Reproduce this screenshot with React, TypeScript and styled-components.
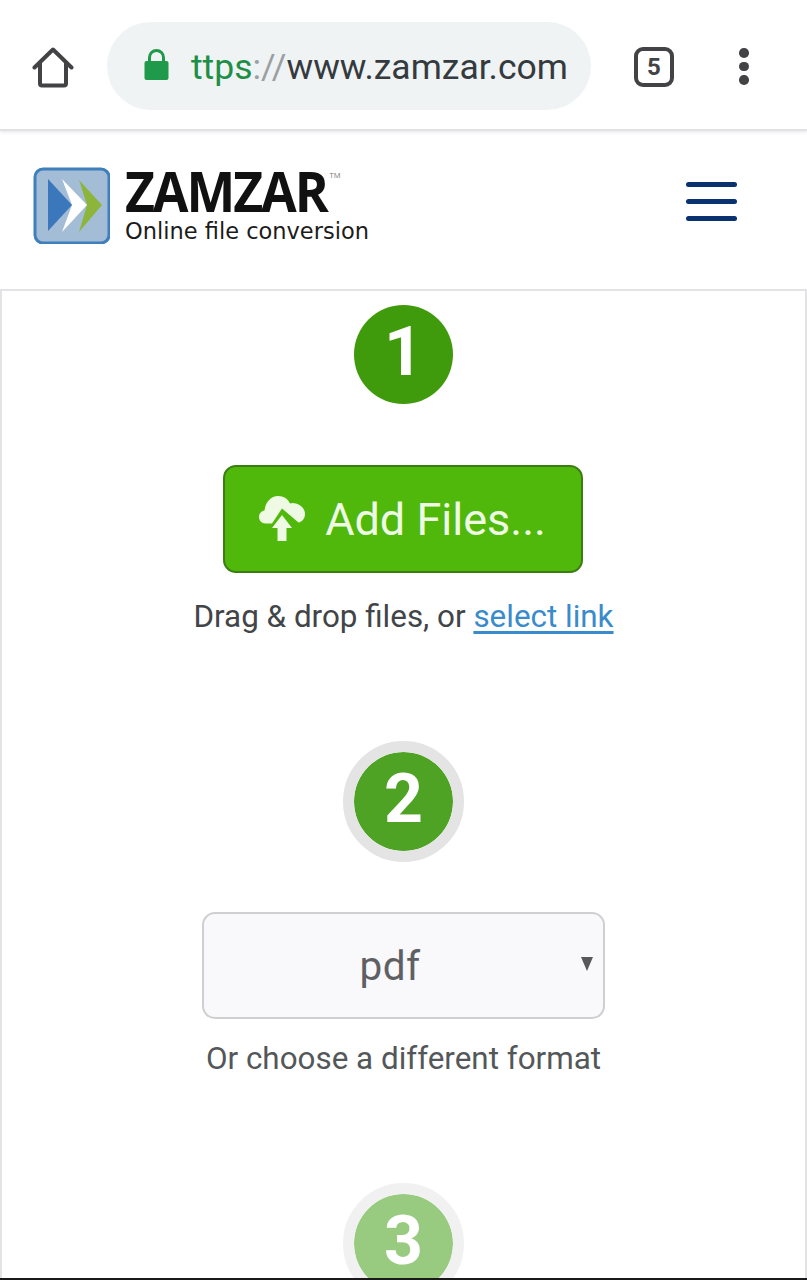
import styled, { createGlobalStyle } from 'styled-components';

const GlobalStyle = createGlobalStyle`
  html, body {
    margin: 0;
    padding: 0;
    background: #fff;
    font-family: Roboto, "Liberation Sans", sans-serif;
  }
  #root {
    height: 1280px;
    overflow: hidden;
  }
`

const Page = styled.div`
  position: relative;
  height: 1280px;
  overflow: hidden;
  background: #fff;
`
const BottomEdge = styled.div`
  position: absolute;
  left: 0;
  right: 0;
  bottom: 0;
  height: 2px;
  background: #1a1a1a;
`

// browser chrome
const BrowserBar = styled.div`
  height: 131px;
  box-sizing: border-box;
  display: flex;
  align-items: center;
  padding: 5px 0 0 32px;
  background: #fff;
  border-bottom: 2px solid #e2e2e4;
  box-shadow: 0 2px 3px #eeeef0;
`
const HomeButton = styled.svg`
  width: 42px;
  height: 42px;
  flex: none;
  margin-top: -1px;
`
const UrlPill = styled.div`
  width: 484px;
  height: 88px;
  margin: -3px 0 0 33px;
  flex: none;
  box-sizing: border-box;
  display: flex;
  align-items: center;
  padding: 3px 0 0 37px;
  border-radius: 44px;
  background: #eff3f4;
  font-size: 35.5px;
  color: #343a3e;
  white-space: nowrap;
`
const LockIcon = styled.svg`
  width: 25px;
  height: 31px;
  flex: none;
  margin: -5px 22px 0 0;
`
const Scheme = styled.span`
  color: #1f8f47;
`
const Slashes = styled.span`
  color: #9a9fa2;
`
const TabCount = styled.div`
  width: 40px;
  height: 40px;
  flex: none;
  margin: -1px 0 0 43px;
  box-sizing: border-box;
  display: flex;
  align-items: center;
  justify-content: center;
  border: 4px solid #434345;
  border-radius: 9px;
  font-size: 24px;
  font-weight: 700;
  color: #434345;
`
const MenuDots = styled.div`
  margin: -1px 0 0 65px;
  display: flex;
  flex-direction: column;
  gap: 4px;
`
const Dot = styled.span`
  width: 9.5px;
  height: 9.5px;
  border-radius: 50%;
  background: #434345;
`

// site header
const SiteHeader = styled.div`
  height: 158px;
  box-sizing: border-box;
  display: flex;
  align-items: flex-start;
  justify-content: space-between;
  padding: 36px 70px 0 33px;
`
const Brand = styled.div`
  display: flex;
  gap: 15px;
`
const LogoMark = styled.svg`
  width: 77px;
  height: 77px;
  flex: none;
`
const BrandText = styled.div`
  display: flex;
  flex-direction: column;
  margin-top: -1px;
`
const BrandName = styled.div`
  font-family: "Open Sans", "Liberation Sans", sans-serif;
  font-weight: 700;
  font-size: 55px;
  line-height: 50px;
  letter-spacing: -2.2px;
  color: #111;
  position: relative;
  width: max-content;
  transform: scaleX(0.94);
  transform-origin: left center;
`
const Trademark = styled.span`
  position: absolute;
  top: 5px;
  left: calc(100% + 3px);
  font-size: 8px;
  line-height: 8px;
  letter-spacing: 0;
  font-weight: 400;
  color: #777;
`
const Tagline = styled.div`
  font-family: "DejaVu Sans", sans-serif;
  font-size: 22.5px;
  line-height: 26px;
  margin-top: 2px;
  color: #1b1b1b;
  white-space: nowrap;
`
const Hamburger = styled.div`
  display: flex;
  flex-direction: column;
  gap: 12px;
  margin-top: 15px;
`
const HamburgerBar = styled.span`
  width: 51px;
  height: 5px;
  border-radius: 3px;
  background: #0a3270;
`

// converter panel
const Panel = styled.div`
  box-sizing: border-box;
  height: 1000px;
  display: flex;
  flex-direction: column;
  align-items: center;
  border: 2px solid #e3e3e5;
  border-bottom: 0;
`
const StepCircle = styled.div<{ $bg: string; $ring?: string }>`
  box-sizing: content-box;
  width: 99px;
  height: 93px;
  padding-bottom: 6px;
  flex: none;
  display: flex;
  align-items: center;
  justify-content: center;
  border-radius: 50%;
  background: ${p => p.$bg};
  background-clip: padding-box;
  border: ${p => (p.$ring ? `11px solid ${p.$ring}` : '0')};
  font-size: 68px;
  font-weight: 700;
  color: #fff;
  line-height: 1;
`
const Step1 = styled.div`
  margin-top: 14px;
  flex: none;
`
const AddFilesButton = styled.button`
  width: 360px;
  height: 108px;
  flex: none;
  margin: 61px 2px 0 0;
  box-sizing: border-box;
  display: flex;
  align-items: center;
  justify-content: center;
  gap: 20px;
  padding: 0;
  background: #4fb80a;
  border: 2px solid #3b7d12;
  border-radius: 13px;
  color: #eefae4;
  font-family: Roboto, sans-serif;
  font-size: 45px;
`
const CloudIcon = styled.svg`
  width: 46px;
  height: 45px;
  flex: none;
  margin-top: -2px;
`
const Hint = styled.p`
  flex: none;
  margin: 22px 0 0;
  font-size: 31.4px;
  line-height: 44px;
  color: #424548;
  white-space: nowrap;
`
const SelectLink = styled.a`
  color: #3a8bcb;
  text-decoration: underline;
  text-underline-offset: 4px;
`
const Step2 = styled.div`
  margin-top: 102px;
  flex: none;
`
const FormatSelect = styled.div`
  width: 403px;
  height: 107px;
  flex: none;
  margin: 50px 1px 0 0;
  box-sizing: border-box;
  position: relative;
  display: flex;
  align-items: center;
  justify-content: center;
  padding-right: 26px;
  background: #f9f8fa;
  border: 2px solid #cfcfd1;
  border-radius: 13px;
  font-size: 40.5px;
  letter-spacing: 0.4px;
  color: #5f6063;
`
const Caret = styled.span`
  position: absolute;
  right: 10px;
  top: 43px;
  width: 0;
  height: 0;
  border-left: 6.5px solid transparent;
  border-right: 6.5px solid transparent;
  border-top: 14px solid #59595c;
`
const Caption = styled.p`
  flex: none;
  margin: 18px 0 0;
  font-size: 31.4px;
  line-height: 44px;
  color: #54575a;
  white-space: nowrap;
`
const Step3 = styled.div`
  margin-top: 102px;
  flex: none;
`

function App() {
  return (
    <Page>
      <GlobalStyle />
      <BrowserBar>
        <HomeButton viewBox="0 0 42 42" fill="none">
          <path d="M2.500 21.500 21 3.500l18.500 18" stroke="#434345" strokeWidth="4" strokeLinecap="round" strokeLinejoin="round" />
          <path d="M8 17v20.500a2 2 0 0 0 2 2h22a2 2 0 0 0 2-2V17" stroke="#434345" strokeWidth="4" strokeLinejoin="round" />
        </HomeButton>
        <UrlPill>
          <LockIcon viewBox="0 0 25 31">
            <path d="M5.500 13V8.500a7 7 0 0 1 14 0V13" fill="none" stroke="#1f9a4a" strokeWidth="3" />
            <rect x="0.500" y="12" width="24" height="19" rx="2" fill="#1f9a4a" />
          </LockIcon>
          <Scheme>ttps</Scheme>
          <Slashes>://</Slashes>
          www.zamzar.com
        </UrlPill>
        <TabCount>5</TabCount>
        <MenuDots>
          <Dot />
          <Dot />
          <Dot />
        </MenuDots>
      </BrowserBar>

      <SiteHeader>
        <Brand>
          <LogoMark viewBox="0 0 77 77">
            <rect x="2" y="2" width="74" height="74" rx="8" fill="#a3bdd6" stroke="#3f7fbc" strokeWidth="3" />
            <polygon points="46,13 69,38 46,65 54,38" fill="#8db53c" />
            <polygon points="29,12 54,38 29,65 39,38" fill="#fff" />
            <polygon points="15,12 39,38 15,64" fill="#3b78bb" />
          </LogoMark>
          <BrandText>
            <BrandName>
              ZAMZAR<Trademark>TM</Trademark>
            </BrandName>
            <Tagline>Online file conversion</Tagline>
          </BrandText>
        </Brand>
        <Hamburger>
          <HamburgerBar />
          <HamburgerBar />
          <HamburgerBar />
        </Hamburger>
      </SiteHeader>

      <Panel>
        <Step1>
          <StepCircle $bg="#3f9a0c">1</StepCircle>
        </Step1>
        <AddFilesButton>
          <CloudIcon viewBox="0 0 46 45">
            <path d="M13 27.500H6.500C2.500 27.500 0 24.500 0 21C0 17.500 2.500 15 5.500 14.500C6.500 6 12 0 19 0C25 0 29 3 31 7.500C33 6.500 35 7 37 7.500C42 9 46 13 46 18C46 22.500 43 26 39.500 26.500L23 12.500Z" fill="#eefae4" />
            <path d="M23 19 33 32H27.500V45H18.500V32H13Z" fill="#eefae4" />
          </CloudIcon>
          Add Files...
        </AddFilesButton>
        <Hint>
          Drag &amp; drop files, or <SelectLink>select link</SelectLink>
        </Hint>
        <Step2>
          <StepCircle $bg="#4fa324" $ring="#e4e4e5">2</StepCircle>
        </Step2>
        <FormatSelect>
          pdf
          <Caret />
        </FormatSelect>
        <Caption>Or choose a different format</Caption>
        <Step3>
          <StepCircle $bg="#98cb7f" $ring="#f1f1f2">3</StepCircle>
        </Step3>
      </Panel>
      <BottomEdge />
    </Page>
  )
}

export default App;
